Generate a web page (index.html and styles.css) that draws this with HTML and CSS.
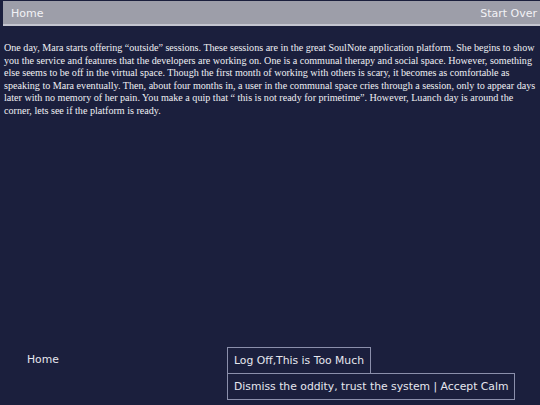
FILE: index.html
```html
<!DOCTYPE html>
<html>
<head>
<meta charset="utf-8">
<link rel="stylesheet" href="styles.css">
</head>
<body>
<div class="page">
  <header class="topbar">
    <span class="nav-link">Home</span>
    <span class="nav-link">Start Over</span>
  </header>
  <main class="story">
    <p>One day, Mara starts offering “outside” sessions. These sessions are in the great SoulNote application platform. She begins to show you the service and features that the developers are working on. One is a communal therapy and social space. However, something else seems to be off in the virtual space. Though the first month of working with others is scary, it becomes as comfortable as speaking to Mara eventually. Then, about four months in, a user in the communal space cries through a session, only to appear days later with no memory of her pain. You make a quip that “ this is not ready for primetime”. However, Luanch day is around the corner, lets see if the platform is ready.</p>
  </main>
  <footer class="actions">
    <span class="home-link">Home</span>
    <div class="choices">
      <span class="choice">Log Off,This is Too Much</span>
      <span class="choice">Dismiss the oddity, trust the system | Accept Calm</span>
    </div>
  </footer>
</div>
</body>
</html>
```

FILE: styles.css
```css
html, body {
  margin: 0;
  padding: 0;
  background: #1b1f3d;
}
.page {
  width: 540px;
  height: 405px;
  display: flex;
  flex-direction: column;
  box-sizing: border-box;
  padding-bottom: 5px;
}
.topbar {
  margin: 1px 0 0 3px;
  height: 22px;
  background: #9d9ea9;
  border-bottom: 2px solid #c4c5cf;
  display: flex;
  justify-content: space-between;
  align-items: center;
  padding: 1px 3px 0 8px;
  box-sizing: content-box;
  font-family: "DejaVu Sans", sans-serif;
  font-size: 11px;
  color: #f2f2f6;
}
.story {
  flex: 1;
  padding: 0 1px 0 4px;
}
.story p {
  margin: 16px 0 0 0;
  font-family: "Liberation Serif", serif;
  font-size: 10.1px;
  line-height: 12.5px;
  color: #f0f0f4;
}
.actions {
  display: flex;
  align-items: flex-start;
  padding-left: 27px;
  font-family: "DejaVu Sans", sans-serif;
  font-size: 10.8px;
  color: #e6e7ef;
}
.home-link {
  width: 200px;
  margin-top: 6px;
}
.choices {
  display: flex;
  flex-direction: column;
  align-items: flex-start;
}
.choice {
  border: 1px solid #8b8fab;
  padding: 5px 6px 5px 6px;
  line-height: 15px;
}
.choice + .choice {
  margin-top: -1px;
}
```
